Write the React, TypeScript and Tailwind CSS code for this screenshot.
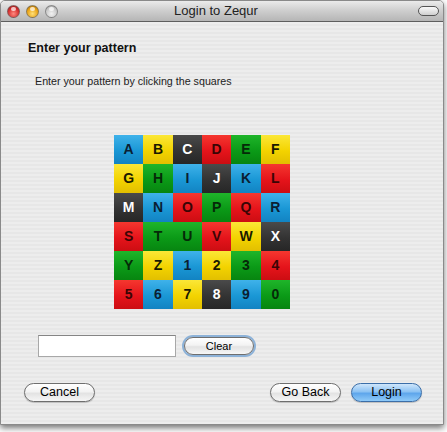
import React from "react";

type C = "b" | "y" | "k" | "r" | "g";
const rows: [string, C][][] = [
  [["A","b"],["B","y"],["C","k"],["D","r"],["E","g"],["F","y"]],
  [["G","y"],["H","g"],["I","b"],["J","k"],["K","b"],["L","r"]],
  [["M","k"],["N","b"],["O","r"],["P","g"],["Q","r"],["R","b"]],
  [["S","r"],["T","g"],["U","g"],["V","r"],["W","y"],["X","k"]],
  [["Y","g"],["Z","y"],["1","b"],["2","y"],["3","g"],["4","r"]],
  [["5","r"],["6","b"],["7","y"],["8","k"],["9","b"],["0","g"]],
];

const cellCls: Record<C, string> = {
  b: "bg-[linear-gradient(180deg,#3fb2ea_0%,#1a97d5_55%,#1283c2_100%)] text-[#0b1f33]",
  y: "bg-[linear-gradient(180deg,#fbe737_0%,#f3d300_55%,#e2bf00_100%)] text-[#1a1a00]",
  k: "bg-[linear-gradient(180deg,#4a4a4a_0%,#333333_55%,#262626_100%)] text-white",
  r: "bg-[linear-gradient(180deg,#f5372f_0%,#e5141b_55%,#cc0d12_100%)] text-[#3a0505]",
  g: "bg-[linear-gradient(180deg,#1fb52a_0%,#0b9a17_55%,#078510_100%)] text-[#052a08]",
};

function Light({ cls }: { cls: string }) {
  return (
    <div className={`w-[13px] h-[13px] rounded-full border border-[#6b6b6b]/70 relative ${cls}`}>
      <div className="absolute left-[3px] top-[1px] w-[5px] h-[4px] rounded-full bg-white/70" />
    </div>
  );
}

function Btn({ label, w, blue, focus, small }: { label: string; w: string; blue?: boolean; focus?: boolean; small?: boolean }) {
  const base = blue
    ? "bg-[linear-gradient(180deg,#cfe6fb_0%,#8cc2f3_45%,#5ea6ec_55%,#8fcaf8_100%)] border-[#3b6ea8] text-black"
    : "bg-[linear-gradient(180deg,#ffffff_0%,#f3f3f3_45%,#e3e3e3_55%,#f6f6f6_100%)] border-[#6e6e6e] text-black";
  const ring = focus ? "shadow-[0_0_0_2px_#8db2d8]" : "shadow-[0_1px_1px_rgba(0,0,0,0.2)]";
  return (
    <div className={`${w} ${small ? "h-[18px] text-[11px]" : "h-[19px] text-[12.5px]"} rounded-full border ${base} ${ring} flex items-center justify-center leading-none font-['Liberation_Sans',sans-serif] text-[#111]`}>
      {label}
    </div>
  );
}

export default function App() {
  return (
    <div className="w-[447px] h-[432px] bg-white relative overflow-hidden">
      <div className="w-[444px] h-[425px] flex flex-col border border-[#8a8a8a] rounded-t-[5px] overflow-hidden shadow-[0_3px_6px_rgba(0,0,0,0.55)] bg-[#ececec]">
        <div className="h-[21px] shrink-0 relative flex items-center border-b border-[#5e5e5e] bg-[linear-gradient(180deg,#ebebeb_0%,#d0d0d0_45%,#b5b5b5_100%)]">
          <div className="flex items-center gap-[6px] pl-[6px]">
            <Light cls="bg-[radial-gradient(circle_at_50%_70%,#ff8a80_0%,#d42a2a_60%,#8e1010_100%)]" />
            <Light cls="bg-[radial-gradient(circle_at_50%_70%,#ffe07a_0%,#e8a010_60%,#9a6200_100%)]" />
            <Light cls="bg-[radial-gradient(circle_at_50%_70%,#f2f2f2_0%,#c8c8c8_60%,#9a9a9a_100%)]" />
          </div>
          <div className="flex-1 text-center text-[13px] text-[#222] font-['Liberation_Sans',sans-serif] pr-[44px]">
            Login to Zequr
          </div>
          <div className="mr-[4px] w-[21px] h-[10px] rounded-full border border-[#555] bg-[linear-gradient(180deg,#fafafa,#cfcfcf)]" />
        </div>
        <div className="flex-1 flex flex-col bg-[repeating-linear-gradient(0deg,#ededed_0px,#ededed_2px,#e7e7e7_2px,#e7e7e7_4px)] font-['Liberation_Sans',sans-serif]">
          <div className="mt-[18px] ml-[27px] h-[16px] leading-[16px] text-[12.5px] font-bold text-[#111]">Enter your pattern</div>
          <div className="mt-[18px] ml-[34px] h-[14px] leading-[14px] text-[10.7px] text-[#222]">Enter your pattern by clicking the squares</div>
          <div className="mt-[47px] ml-[113px] w-[176px] grid grid-cols-6">
            {rows.flat().map(([ch, c]) => (
              <div key={ch} className={`h-[29px] flex items-center justify-center text-[14px] font-bold ${cellCls[c]}`}>
                {ch}
              </div>
            ))}
          </div>
          <div className="mt-[26px] ml-[37px] flex items-center gap-[8px]">
            <div className="w-[138px] h-[22px] bg-white border border-[#a8a8a8] border-t-[#858585]" />
            <Btn label="Clear" w="w-[70px]" focus small />
          </div>
          <div className="mt-[26px] ml-[23px] mr-[21px] flex items-center">
            <Btn label="Cancel" w="w-[71px]" />
            <div className="flex-1" />
            <Btn label="Go Back" w="w-[71px]" />
            <div className="w-[10px]" />
            <Btn label="Login" w="w-[71px]" blue />
          </div>
        </div>
      </div>
    </div>
  );
}
